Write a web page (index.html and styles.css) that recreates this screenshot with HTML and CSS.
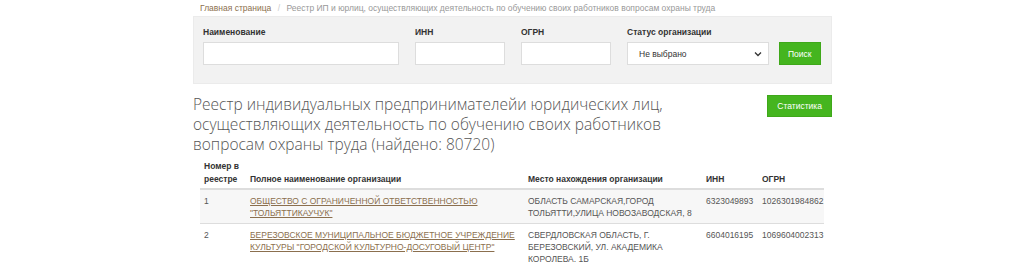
FILE: index.html
```html
<!DOCTYPE html>
<html lang="ru">
<head>
    <meta charset="UTF-8">
    <title>Реестр ИП и юрлиц</title>
    <link rel="stylesheet" href="styles.css">
</head>
<body>
<div class="container">
    <div class="breadcrumb">
        <a href="#">Главная страница</a>
        <span class="sep">/</span>
        <span class="current">Реестр ИП и юрлиц, осуществляющих деятельность по обучению своих работников вопросам охраны труда</span>
    </div>

    <!-- форма поиска -->
    <form class="search">
        <div class="field f-name">
            <label>Наименование</label>
            <input type="text">
        </div>
        <div class="field f-inn">
            <label>ИНН</label>
            <input type="text">
        </div>
        <div class="field f-ogrn">
            <label>ОГРН</label>
            <input type="text">
        </div>
        <div class="field f-status">
            <label>Статус организации</label>
            <div class="select">
                <span>Не выбрано</span>
                <svg width="8" height="6" viewBox="0 0 8 6"><path d="M1 1.5 L4 4.5 L7 1.5" fill="none" stroke="#333" stroke-width="1.3"/></svg>
            </div>
        </div>
        <button type="button" class="btn">Поиск</button>
    </form>

    <div class="head">
        <h1>Реестр индивидуальных предпринимателейи юридических лиц, осуществляющих деятельность по обучению своих работников вопросам охраны труда (найдено: 80720)</h1>
        <button type="button" class="btn btn-stat">Статистика</button>
    </div>

    <table class="reg">
        <thead>
        <tr>
            <th class="c-num">Номер в реестре</th>
            <th class="c-name">Полное наименование организации</th>
            <th class="c-place">Место нахождения организации</th>
            <th class="c-inn">ИНН</th>
            <th class="c-ogrn">ОГРН</th>
        </tr>
        </thead>
        <tbody>
        <tr class="odd">
            <td>1</td>
            <td><a href="#">ОБЩЕСТВО С ОГРАНИЧЕННОЙ ОТВЕТСТВЕННОСТЬЮ "ТОЛЬЯТТИКАУЧУК"</a></td>
            <td>ОБЛАСТЬ САМАРСКАЯ,ГОРОД ТОЛЬЯТТИ,УЛИЦА НОВОЗАВОДСКАЯ, 8</td>
            <td>6323049893</td>
            <td>1026301984862</td>
        </tr>
        <tr>
            <td>2</td>
            <td><a href="#">БЕРЕЗОВСКОЕ МУНИЦИПАЛЬНОЕ БЮДЖЕТНОЕ УЧРЕЖДЕНИЕ КУЛЬТУРЫ "ГОРОДСКОЙ КУЛЬТУРНО-ДОСУГОВЫЙ ЦЕНТР"</a></td>
            <td>СВЕРДЛОВСКАЯ ОБЛАСТЬ, Г. БЕРЕЗОВСКИЙ, УЛ. АКАДЕМИКА КОРОЛЕВА, 1Б</td>
            <td>6604016195</td>
            <td>1069604002313</td>
        </tr>
        </tbody>
    </table>
</div>
</body>
</html>
```

FILE: styles.css
```css
body {
    margin: 0;
    background: #fff;
    font-family: "Liberation Sans", Arial, sans-serif;
    color: #333;
}

.container {
    width: 639px;
    margin-left: 193px;
}

/* хлебные крошки */
.breadcrumb {
    height: 15px;
    padding: 1px 0 0 7px;
    font-size: 8.5px;
    line-height: 14px;
    color: #999;
}
.breadcrumb a {
    color: #8b6f4e;
    text-decoration: none;
}
.breadcrumb .sep {
    color: #ccc;
    margin: 0 4px;
}

/* панель поиска */
.search {
    display: flex;
    align-items: flex-end;
    background: #f2f2f2;
    border: 1px solid #ebebeb;
    padding: 12px 10px 18px 9px;
    height: 36px;
    margin: 0;
}
.field {
    display: flex;
    flex-direction: column;
    margin-right: 16px;
}
.field label {
    font-size: 8.5px;
    font-weight: bold;
    color: #333;
    margin-bottom: 5px;
}
.field input,
.select {
    box-sizing: border-box;
    height: 23px;
    border: 1px solid #ddd;
    background: #fff;
    margin: 0;
}
.f-name input { width: 196px; }
.f-inn input { width: 90px; }
.f-ogrn input { width: 90px; }
.f-status { margin-right: 10px; }
.select {
    width: 142px;
    display: flex;
    align-items: center;
    justify-content: space-between;
    padding: 0 6px 0 11px;
    font-size: 8.5px;
    color: #333;
}

.btn {
    background: #45b51f;
    color: #fff;
    border: 1px solid #3fa81a;
    font-family: inherit;
    font-size: 8.5px;
    height: 23px;
    padding: 0 8px;
    cursor: pointer;
}

/* заголовок */
.head {
    display: flex;
    justify-content: space-between;
    align-items: flex-start;
    margin-top: 10px;
}
.head h1 {
    margin: 0;
    width: 500px;
    font-family: "Open Sans", sans-serif;
    font-weight: 300;
    font-size: 15.5px;
    line-height: 20px;
    color: #555;
}
.btn-stat {
    height: 22px;
    margin-top: 1px;
    padding: 0 9px;
}

/* таблица */
.reg {
    margin: 6px 0 0 7px;
    width: 624px;
    table-layout: fixed;
    border-collapse: collapse;
    font-size: 8.5px;
    color: #555;
}
.reg th {
    text-align: left;
    vertical-align: bottom;
    font-weight: bold;
    color: #333;
    line-height: 13px;
    padding: 0 4px 2px;
    border-bottom: 2px solid #ddd;
}
.reg td {
    vertical-align: top;
    line-height: 12px;
    padding: 5px 4px 4px;
    border-top: 1px solid #ddd;
}
.reg tr.odd td { background: #f7f7f7; }
.reg a {
    color: #8b6f4e;
    text-decoration: underline;
}
.c-num { width: 38px; }
.c-name { width: 270px; }
.c-place { width: 170px; }
.c-inn { width: 48px; }
```
